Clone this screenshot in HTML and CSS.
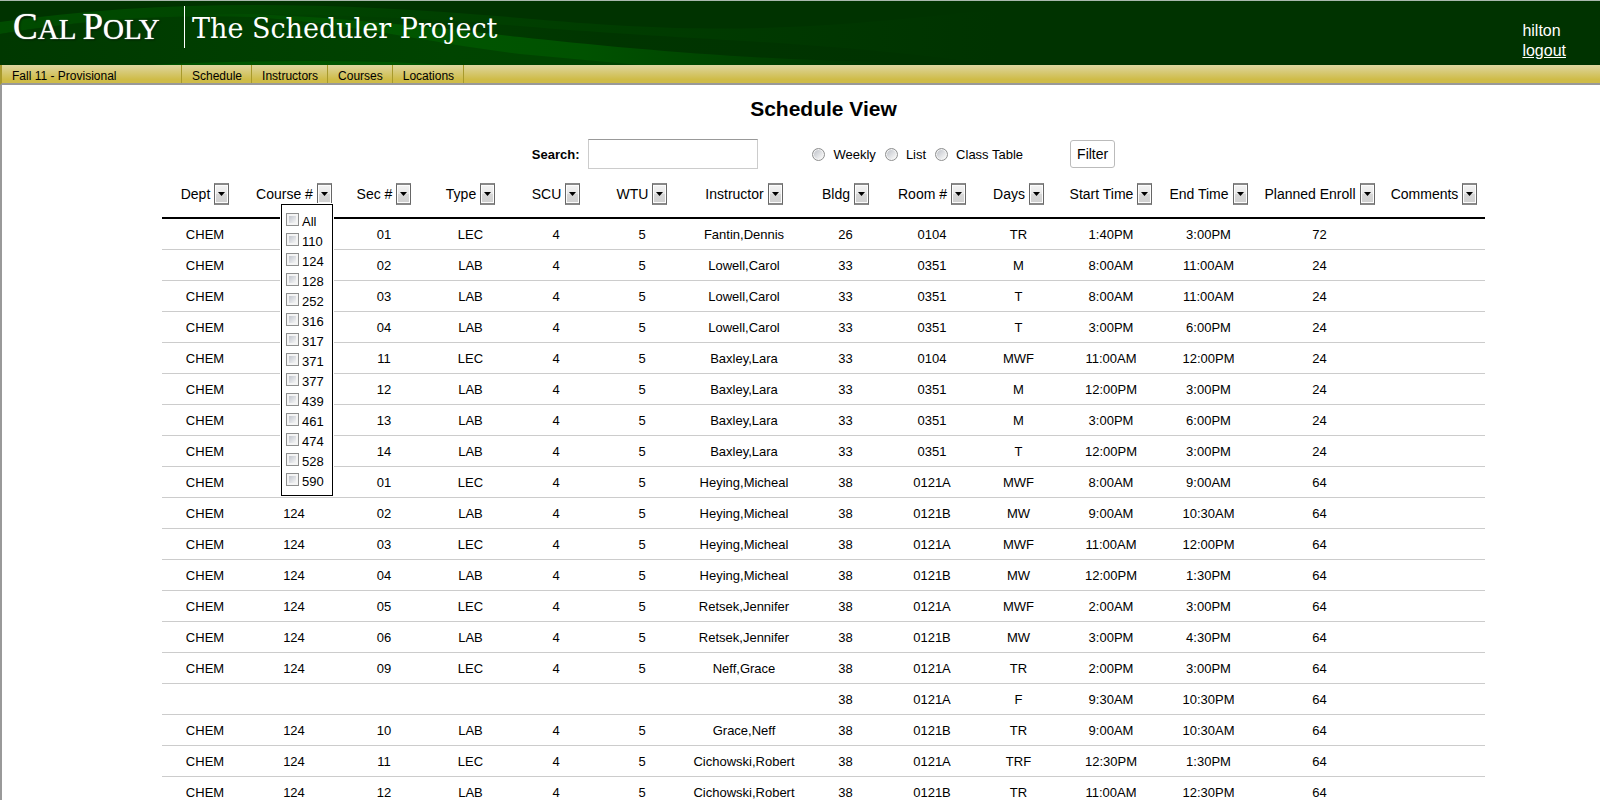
FILE: index.html
```html
<!DOCTYPE html>
<html lang="en">
<head>
<meta charset="utf-8">
<title>The Scheduler Project</title>
<link rel="stylesheet" href="styles.css">
</head>
<body>
<header class="banner">
  <svg class="banner-art" viewBox="0 0 1100 64" preserveAspectRatio="none" aria-hidden="true">
    <defs>
      <linearGradient id="base" x1="0" x2="1" y1="0" y2="0">
        <stop offset="0" stop-color="#004400"/><stop offset="0.35" stop-color="#004000"/><stop offset="0.6" stop-color="#003500"/><stop offset="0.9" stop-color="#003300"/>
      </linearGradient>
      <linearGradient id="band" x1="0" x2="1" y1="0" y2="0">
        <stop offset="0" stop-color="#004000"/><stop offset="0.25" stop-color="#004a00"/><stop offset="0.42" stop-color="#005600"/><stop offset="0.65" stop-color="#005200"/><stop offset="1" stop-color="#003300"/>
      </linearGradient>
      <linearGradient id="under" x1="0" x2="1" y1="0" y2="0">
        <stop offset="0" stop-color="#003800"/><stop offset="0.7" stop-color="#004400"/><stop offset="1" stop-color="#004200"/>
      </linearGradient>
      <linearGradient id="upper" x1="0" x2="1" y1="0" y2="0">
        <stop offset="0" stop-color="#004c00"/><stop offset="0.3" stop-color="#004400"/><stop offset="1" stop-color="#003300"/>
      </linearGradient>
    </defs>
    <rect width="1100" height="64" fill="#003300"/>
    <path d="M0 21C160 -2 330 0 520 17S800 30 1000 8V64H0Z" fill="url(#upper)"/>
    <path d="M0 33C140 7 330 9 520 25S800 38 1000 64H0Z" fill="url(#base)"/>
    <path d="M250 13C350 17 420 25 520 36S760 60 900 61V64H0V33C80 20 160 13 250 13Z" fill="url(#band)"/>
    <path d="M0 33C80 20 160 13 250 16C350 22 430 42 520 53L640 64H0Z" fill="url(#under)"/>
    <path d="M150 64Q260 58 390 61L450 64Z" fill="#005500"/>
  </svg>
  <div class="brand">
    <a class="logo" href="#"><span class="cap">C</span>AL <span class="cap">P</span>OLY</a>
    <span class="project">The Scheduler Project</span>
  </div>
  <div class="account">
    <span>hilton</span>
    <a href="#">logout</a>
  </div>
</header>
<nav class="menu">
  <span class="term">Fall 11 - Provisional</span>
  <a href="#">Schedule</a>
  <a href="#">Instructors</a>
  <a href="#">Courses</a>
  <a href="#">Locations</a>
</nav>
<main class="page">
  <h1>Schedule View</h1>
  <form class="filters">
    <label class="search-label" for="search">Search:</label>
    <input class="search" id="search" type="text">
    <div class="views">
      <input type="radio" name="view" id="weekly"><label for="weekly">Weekly</label>
      <input type="radio" name="view" id="list"><label for="list">List</label>
      <input type="radio" name="view" id="classes"><label for="classes">Class Table</label>
    </div>
    <button class="filter" type="button">Filter</button>
  </form>
  <table class="schedule">
    <colgroup id="cols"></colgroup>
    <thead><tr id="heads"></tr></thead>
    <tbody id="rows"></tbody>
  </table>
</main>
<script src="app.js"></script>
</body>
</html>
```
FILE: styles.css
```css
* { box-sizing: border-box; }
html { height: 100%; overflow: hidden; }
body {
  margin: 0;
  height: 100%;
  overflow: hidden;
  background: #fff;
  color: #000;
  font-family: "Liberation Sans", Arial, sans-serif;
  font-size: 13px;
}

.banner {
  position: relative;
  display: flex;
  justify-content: space-between;
  height: 65px;
  border-top: 1px solid #a9b9ae;
  background: #003300;
  color: #fff;
}
.banner-art { position: absolute; top: 0; left: 0; width: 1100px; height: 64px; }
.brand { position: relative; display: flex; align-items: flex-start; padding: 5px 0 0 13px; }
.logo {
  width: 172px;
  height: 42px;
  border-right: 1px solid #fff;
  color: #fff;
  font-family: "Liberation Serif", serif;
  font-size: 29px;
  line-height: 42px;
  text-decoration: none;
  white-space: nowrap;
  text-shadow: 0 0 1px #fff, 1px 1px 2px #001800;
}
.logo .cap { font-size: 37px; }
.project {
  padding-left: 7px;
  font-family: "DejaVu Serif", serif;
  font-size: 27px;
  line-height: 46px;
}
.account {
  position: relative;
  display: flex;
  flex-direction: column;
  padding: 20px 34px 0 0;
  font-size: 16px;
  line-height: 20px;
}
.account a { color: #fff; }

.menu {
  display: flex;
  height: 20px;
  border-left: 2px solid #a89a2c;
  border-bottom: 2px solid #999;
  background: linear-gradient(#ded6a0, #cfbc48 80%);
  font-size: 12px;
  line-height: 22px;
}
.menu a, .menu .term { padding: 0 9px 0 10px; border-right: 1px solid #a89a2c; color: #000; text-decoration: none; }
.menu .term { width: 180px; }

.page {
  display: flex;
  flex-direction: column;
  align-items: center;
  min-height: calc(100% - 85px);
  padding: 12px 0 0 45px;
  border-left: 2px solid #999;
}
h1 { margin: 0; font-size: 21px; line-height: 24px; }

.filters { display: flex; align-items: center; margin: 18px 0 9px; }
.search-label { font-weight: bold; }
.search { width: 170px; height: 30px; margin-left: 9px; border: 1px solid #ccc; border-top-color: #999; }
.views { display: flex; align-items: center; margin-left: 54px; }
.views label { margin: 0 9px 0 8px; }
.filter {
  height: 28px;
  margin-left: 38px;
  padding: 0 6px;
  border: 1px solid #bbb;
  border-radius: 3px;
  background: #fff;
  font: 14px "Liberation Sans", Arial, sans-serif;
}
input[type="radio"], input[type="checkbox"] { appearance: none; flex: none; width: 13px; height: 13px; margin: 0; }
input[type="radio"] {
  border: 1px solid #8e8f8f;
  border-radius: 50%;
  background: linear-gradient(135deg, #b8bcc4, #f4f4f4 80%);
  box-shadow: inset 0 0 0 1px #f4f4f4;
}
input[type="checkbox"] {
  border: 1px solid #8e8f8f;
  padding: 2px;
  background: linear-gradient(135deg, #c0c4cc, #f6f6f6) content-box, #f4f4f4;
}

.schedule { table-layout: fixed; border-collapse: separate; border-spacing: 0; width: 0; }
.narrow { width: 85px; }
.basic { width: 86px; }
.medium { width: 88px; }
.course { width: 92px; }
.end { width: 95px; }
.start { width: 100px; }
.comments { width: 102px; }
.name { width: 118px; }
.enroll { width: 127px; }
.schedule th { height: 41px; padding: 0 0 7px; border-bottom: 2px solid #000; font-size: 14px; font-weight: normal; }
.schedule td { height: 31px; padding: 2px 0 0; border-bottom: 1px solid #ccc; line-height: 22px; text-align: center; white-space: nowrap; }
.head { position: relative; display: flex; align-items: center; justify-content: center; gap: 4px; white-space: nowrap; }
.drop {
  display: grid;
  place-items: center;
  width: 15px;
  height: 22px;
  padding: 0;
  border: 1px solid #777;
  border-width: 2px 1px;
  border-color: #888 #666;
  background: linear-gradient(#f3f3f3, #e8e8e8 50%, #d8d8d8 50%, #cfcfcf);
  box-shadow: inset 0 0 0 1px #fcfcfc;
}
.drop svg { width: 7px; height: 4px; }

.options {
  position: absolute;
  top: 21px;
  right: 7px;
  z-index: 1;
  width: 52px;
  padding: 6px 4px 4px;
  border: 1px solid #000;
  outline: 1px solid #fff;
  background: #fff;
  font-size: 13px;
}
.options label { display: flex; align-items: flex-start; gap: 3px; height: 20px; padding-top: 2px; line-height: 17px; }
```
FILE: app.js
```js
const columns = [
  ['Dept', 'basic'], ['Course #', 'course'], ['Sec #', 'medium'], ['Type', 'narrow'],
  ['SCU', 'basic'], ['WTU', 'basic'], ['Instructor', 'name'], ['Bldg', 'narrow'],
  ['Room #', 'medium'], ['Days', 'narrow'], ['Start Time', 'start'], ['End Time', 'end'],
  ['Planned Enroll', 'enroll'], ['Comments', 'comments']
];
const courses = ['All', 110, 124, 128, 252, 316, 317, 371, 377, 439, 461, 474, 528, 590];
const sections = `CHEM|110|01|LEC|4|5|Fantin,Dennis|26|0104|TR|1:40PM|3:00PM|72
CHEM|110|02|LAB|4|5|Lowell,Carol|33|0351|M|8:00AM|11:00AM|24
CHEM|110|03|LAB|4|5|Lowell,Carol|33|0351|T|8:00AM|11:00AM|24
CHEM|110|04|LAB|4|5|Lowell,Carol|33|0351|T|3:00PM|6:00PM|24
CHEM|110|11|LEC|4|5|Baxley,Lara|33|0104|MWF|11:00AM|12:00PM|24
CHEM|110|12|LAB|4|5|Baxley,Lara|33|0351|M|12:00PM|3:00PM|24
CHEM|110|13|LAB|4|5|Baxley,Lara|33|0351|M|3:00PM|6:00PM|24
CHEM|110|14|LAB|4|5|Baxley,Lara|33|0351|T|12:00PM|3:00PM|24
CHEM|124|01|LEC|4|5|Heying,Micheal|38|0121A|MWF|8:00AM|9:00AM|64
CHEM|124|02|LAB|4|5|Heying,Micheal|38|0121B|MW|9:00AM|10:30AM|64
CHEM|124|03|LEC|4|5|Heying,Micheal|38|0121A|MWF|11:00AM|12:00PM|64
CHEM|124|04|LAB|4|5|Heying,Micheal|38|0121B|MW|12:00PM|1:30PM|64
CHEM|124|05|LEC|4|5|Retsek,Jennifer|38|0121A|MWF|2:00AM|3:00PM|64
CHEM|124|06|LAB|4|5|Retsek,Jennifer|38|0121B|MW|3:00PM|4:30PM|64
CHEM|124|09|LEC|4|5|Neff,Grace|38|0121A|TR|2:00PM|3:00PM|64
|||||||38|0121A|F|9:30AM|10:30PM|64
CHEM|124|10|LAB|4|5|Grace,Neff|38|0121B|TR|9:00AM|10:30AM|64
CHEM|124|11|LEC|4|5|Cichowski,Robert|38|0121A|TRF|12:30PM|1:30PM|64
CHEM|124|12|LAB|4|5|Cichowski,Robert|38|0121B|TR|11:00AM|12:30PM|64`;

const options = `<div class="options">${courses.map(c =>
  `<label><input type="checkbox">${c}</label>`).join('')}</div>`;

document.getElementById('cols').innerHTML = columns.map(([, size]) => `<col class="${size}">`).join('');
document.getElementById('heads').innerHTML = columns.map(([title]) => `<th scope="col"><div class="head">${title}
  <button class="drop" type="button" aria-label="Filter ${title}"><svg viewBox="0 0 7 4"><path d="M0 0H7L3.5 4Z"/></svg></button>
  ${title === 'Course #' ? options : ''}</div></th>`).join('');
// Every row ends with an empty comments cell.
document.getElementById('rows').innerHTML = sections.split('\n').map(line =>
  `<tr>${[...line.split('|'), ''].map(value => `<td>${value}</td>`).join('')}</tr>`).join('');
```
